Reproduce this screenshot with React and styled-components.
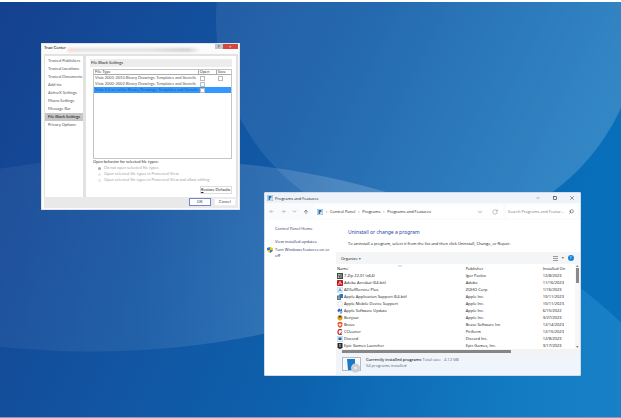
import React from "react";
import styled, { createGlobalStyle } from "styled-components";
import { ArrowLeft, ArrowRight, ArrowUp, ChevronDown, RotateCw, Search, Minus, Square, X } from "lucide-react";

const sidebarItems = [
  "Trusted Publishers",
  "Trusted Locations",
  "Trusted Documents",
  "Add-ins",
  "ActiveX Settings",
  "Macro Settings",
  "Message Bar",
  "File Block Settings",
  "Privacy Options",
];

const fileTypes = [
  { name: "Visio 2003-2010 Binary Drawings, Templates and Stencils", save: true },
  { name: "Visio 2000-2002 Binary Drawings, Templates and Stencils" },
  { name: "Visio 5.0 or earlier Binary Drawings, Templates and Stencils", selected: true },
];

const behaviors = [
  "Do not open selected file types",
  "Open selected file types in Protected View",
  "Open selected file types in Protected View and allow editing",
];

const programs = [
  ["7-Zip 22.01 (x64)", "Igor Pavlov", "12/8/2023", "zip"],
  ["Adobe Acrobat (64-bit)", "Adobe", "11/16/2023", "acrobat"],
  ["ADSelfService Plus", "ZOHO Corp.", "1/16/2023", "adself"],
  ["Apple Application Support (64-bit)", "Apple Inc.", "10/11/2023", "appsupport"],
  ["Apple Mobile Device Support", "Apple Inc.", "10/11/2023", "mobile"],
  ["Apple Software Update", "Apple Inc.", "6/15/2022", "update"],
  ["Bonjour", "Apple Inc.", "3/27/2023", "bonjour"],
  ["Brave", "Brave Software Inc", "12/14/2023", "brave"],
  ["CCleaner", "Piriform", "12/15/2023", "ccleaner"],
  ["Discord", "Discord Inc.", "12/8/2023", "discord"],
  ["Epic Games Launcher", "Epic Games, Inc.", "3/17/2023", "epic"],
];

export default function App() {
  return (
    <Desktop>
      <GlobalStyle />
      <Wallpaper />
      <TrustCenter />
      <ProgramsAndFeatures />
    </Desktop>
  );
}

function Wallpaper() {
  return (
    <WallpaperSvg viewBox="0 0 621 414" preserveAspectRatio="none" aria-hidden="true">
      <defs>
        <linearGradient id="base" x1="0" y1="0" x2="1" y2="0.3">
          <stop offset="0" stopColor="#15418f" />
          <stop offset="0.4" stopColor="#1254a1" />
          <stop offset="1" stopColor="#086fba" />
        </linearGradient>
        <linearGradient id="top" x1="0" y1="0" x2="1" y2="0.5">
          <stop offset="0" stopColor="#fff" stopOpacity="0.06" />
          <stop offset="0.5" stopColor="#fff" stopOpacity="0.09" />
          <stop offset="1" stopColor="#fff" stopOpacity="0.17" />
        </linearGradient>
        <linearGradient id="left" x1="0" y1="0" x2="1" y2="0">
          <stop offset="0" stopColor="#fff" stopOpacity="0.04" />
          <stop offset="0.4" stopColor="#fff" stopOpacity="0.07" />
          <stop offset="0.75" stopColor="#fff" stopOpacity="0.16" />
          <stop offset="1" stopColor="#fff" stopOpacity="0.2" />
        </linearGradient>
        <linearGradient id="corner" x1="0" y1="0" x2="1" y2="0">
          <stop offset="0" stopColor="#3aa5e0" stopOpacity="0" />
          <stop offset="1" stopColor="#3aa5e0" stopOpacity="0.32" />
        </linearGradient>
      </defs>
      <rect width="621" height="414" fill="url(#base)" />
      <circle cx="428" cy="18" r="212" fill="url(#top)" />
      <path
        d="M-60 180Q30 155 130 156C230 156 320 168 400 194C500 230 420 300 264 331C160 352 60 355 -60 336Z"
        fill="url(#left)"
      />
      <path d="M300 414V250H520Q575 275 621 320V414Z" fill="url(#corner)" />
    </WallpaperSvg>
  );
}

function TrustCenter() {
  return (
    <TrustWindow aria-label="Trust Center">
      <TrustTitle>
        <span>Trust Center</span>
        <TrustGlass />
        <HelpButton aria-label="Help">?</HelpButton>
        <RedClose aria-label="Close">×</RedClose>
      </TrustTitle>
      <TrustBody>
        <TrustSidebar>
          {sidebarItems.map((item) => (
            <SidebarButton key={item} $active={item === "File Block Settings"}>
              {item}
            </SidebarButton>
          ))}
        </TrustSidebar>
        <TrustMain>
          <SectionTitle>File Block Settings</SectionTitle>
          <TypeBox>
            <TypeTable>
              <thead>
                <tr>
                  <th>File Type</th>
                  <th>Open</th>
                  <th>Save</th>
                </tr>
              </thead>
              <tbody>
                {fileTypes.map((type) => (
                  <TypeRow key={type.name} $selected={type.selected}>
                    <td>{type.name}</td>
                    <td>
                      <Tick type="checkbox" aria-label={"Open " + type.name} />
                    </td>
                    <td>{type.save && <Tick type="checkbox" aria-label={"Save " + type.name} />}</td>
                  </TypeRow>
                ))}
              </tbody>
            </TypeTable>
          </TypeBox>
          <Behavior>
            <legend>Open behavior for selected file types:</legend>
            {behaviors.map((text, i) => (
              <BehaviorLabel key={text}>
                <Radio type="radio" name="behavior" disabled defaultChecked={i === 0} />
                {text}
              </BehaviorLabel>
            ))}
          </Behavior>
          <RestoreButton>Restore Defaults</RestoreButton>
        </TrustMain>
      </TrustBody>
      <TrustFooter>
        <DialogButton $primary>OK</DialogButton>
        <DialogButton>Cancel</DialogButton>
      </TrustFooter>
    </TrustWindow>
  );
}

function ProgramsAndFeatures() {
  return (
    <ProgramsWindow aria-label="Programs and Features">
      <ProgramsTitle>
        <PanelIcon />
        <TitleText>Programs and Features</TitleText>
        <IconButton aria-label="Minimize"><Minus size={4} /></IconButton>
        <IconButton aria-label="Maximize"><Square size={4} strokeWidth={4} /></IconButton>
        <IconButton aria-label="Close"><X size={6} /></IconButton>
      </ProgramsTitle>
      <NavBar>
        <NavButtons>
          <IconButton $muted aria-label="Back"><ArrowLeft size={5} /></IconButton>
          <IconButton $muted aria-label="Forward"><ArrowRight size={5} /></IconButton>
          <IconButton $muted aria-label="Recent"><ChevronDown size={5} strokeWidth={3} /></IconButton>
          <IconButton aria-label="Up"><ArrowUp size={6} /></IconButton>
        </NavButtons>
        <Address>
          <PanelIcon />
          <Crumb>›</Crumb>
          <a href="#control-panel">Control Panel</a>
          <Crumb>›</Crumb>
          <a href="#programs">Programs</a>
          <Crumb>›</Crumb>
          <a href="#features">Programs and Features</a>
          <Spacer />
          <IconButton $muted aria-label="Previous locations"><ChevronDown size={6} strokeWidth={3} /></IconButton>
          <IconButton $muted aria-label="Refresh"><RotateCw size={6} /></IconButton>
        </Address>
        <SearchBox>
          <input type="text" aria-label="Search" placeholder="Search Programs and Featur..." />
          <FlippedSearch size={5} />
        </SearchBox>
      </NavBar>
      <ProgramsBody>
        <Tasks>
          <TaskLink href="#home" $first>Control Panel Home</TaskLink>
          <TaskLink href="#updates">View installed updates</TaskLink>
          <ShieldLink href="#windows-features">
            <ShieldIcon />
            <span>Turn Windows features on or off</span>
          </ShieldLink>
        </Tasks>
        <ProgramsMain>
          <Intro>
            <h1>Uninstall or change a program</h1>
            <p>To uninstall a program, select it from the list and then click Uninstall, Change, or Repair.</p>
          </Intro>
          <Toolbar>
            <OrganizeButton>Organize <small>▾</small></OrganizeButton>
            <Spacer />
            <ViewButton aria-label="Change view">
              <svg width="5" height="5" viewBox="0 0 5 5">
                <path d="M0 .5h5M0 2.5h5M0 4.5h5" stroke="#999" />
              </svg>
            </ViewButton>
            <ViewButton aria-label="More view options"><small>▾</small></ViewButton>
            <HelpDot aria-label="Help">?</HelpDot>
          </Toolbar>
          <ListArea>
            <ProgramTable>
              <thead>
                <tr>
                  <th>
                    Name
                    <SortMark viewBox="0 0 4 2">
                      <path d="M0 2L2 0L4 2" fill="none" stroke="#aaa" strokeWidth=".6" />
                    </SortMark>
                  </th>
                  <th>Publisher</th>
                  <th>Installed On</th>
                </tr>
              </thead>
              <tbody>
                {programs.map(([name, publisher, date, icon]) => (
                  <tr key={name}>
                    <td>
                      <NameCell>
                        <ProgramIcon kind={icon} />
                        {name}
                      </NameCell>
                    </td>
                    <td>{publisher}</td>
                    <td>{date}</td>
                  </tr>
                ))}
              </tbody>
            </ProgramTable>
            <VScroll>
              <small>▴</small>
              <VThumb />
              <Spacer />
              <small>▾</small>
            </VScroll>
          </ListArea>
          <HScroll>
            <HThumb />
          </HScroll>
          <Status>
            <DiscIcon />
            <div>
              <p>
                <b>Currently installed programs</b> <span>Total size:</span> <em>4.12 GB</em>
              </p>
              <p>54 programs installed</p>
            </div>
          </Status>
        </ProgramsMain>
      </ProgramsBody>
    </ProgramsWindow>
  );
}

function PanelIcon() {
  return (
    <svg width="6" height="6" viewBox="0 0 12 12" aria-hidden="true">
      <rect x=".5" y=".5" width="11" height="11" fill="#e8f2fa" stroke="#8fa9bd" />
      <path d="M3 2h6v3L6 8v2H3z" fill="#1874c4" />
      <circle cx="8.5" cy="8.5" r="2.5" fill="#cfdbe5" />
    </svg>
  );
}

function ShieldIcon() {
  return (
    <svg width="6" height="6" viewBox="0 0 12 12" aria-hidden="true">
      <path d="M6 0L0 2v4h6z" fill="#2f7fd0" />
      <path d="M6 0l6 2v4H6z" fill="#f3c613" />
      <path d="M0 6h6v6Q1 10 0 6z" fill="#f3c613" />
      <path d="M12 6H6v6q5-2 6-6z" fill="#2f7fd0" />
    </svg>
  );
}

function DiscIcon() {
  return (
    <svg width="20" height="16" viewBox="0 0 20 16" aria-hidden="true">
      <rect x=".5" y=".5" width="18" height="13" fill="#f7fafc" stroke="#b4bcc4" />
      <path d="M5 2h8v6l-3 2v3H6z" fill="#1878c9" />
      <circle cx="13.5" cy="11" r="4.5" fill="#c9cfd5" />
      <circle cx="13.5" cy="11" r="1.2" fill="#f3f6f8" />
    </svg>
  );
}

const iconShapes = {
  zip: (
    <>
      <rect width="12" height="12" fill="#3c4a44" />
      <path d="M2 3h3L2 9h3M8 2v8" stroke="#dde5df" strokeWidth="1.5" fill="none" />
    </>
  ),
  acrobat: (
    <>
      <rect width="12" height="12" rx="1.5" fill="#c4161c" />
      <path d="M2 9Q6 7 6 2Q6 7 10 8Q6 6 2 9" stroke="#fff" fill="none" />
    </>
  ),
  adself: (
    <>
      <rect x=".5" y=".5" width="11" height="11" fill="#eef6fc" stroke="#b8d3e8" />
      <path d="M3 9l3-6 3 6M4 7h4" stroke="#2d8fd6" strokeWidth="1.4" fill="none" />
    </>
  ),
  appsupport: (
    <>
      <rect x="0" y="3" width="8" height="9" fill="#5b7383" />
      <rect x="5" y="0" width="7" height="8" fill="#2878b8" />
      <path d="M2 6h4M2 9h4" stroke="#dfe8ee" />
    </>
  ),
  mobile: <rect x="1.5" y="1.5" width="9" height="9" rx="2" fill="#fbfbfc" stroke="#cdd2d8" />,
  update: (
    <>
      <path d="M1 6Q1 1 6 1V4l4-3v6H6Q3 6 3 9z" fill="#3068c8" />
      <path d="M11 6q0 6-5 6V9z" fill="#7ea3dd" />
    </>
  ),
  bonjour: (
    <>
      <path d="M1 3h10v5q-5 6-10 0z" fill="#e2a11a" />
      <rect x="3" y="1" width="6" height="4" fill="#5a4317" />
    </>
  ),
  brave: (
    <>
      <path d="M3 0h6l2 3-1 6-4 3-4-3-1-6z" fill="#ee4f26" />
      <path d="M4 3l2 1 2-1 1 2-3 4-3-4z" fill="#fff" />
    </>
  ),
  ccleaner: (
    <>
      <path d="M10 2Q2-1 2 6t8 4" stroke="#c62828" strokeWidth="2.6" fill="none" />
      <path d="M5 12l5-7" stroke="#6b6b6b" strokeWidth="2" />
    </>
  ),
  discord: (
    <>
      <rect x=".5" y=".5" width="11" height="11" fill="#eaf3fb" stroke="#b7cbdc" />
      <rect x="3" y="3" width="6" height="5" fill="#1667b7" />
    </>
  ),
  epic: (
    <>
      <path d="M1 0h10v10l-5 2-5-2z" fill="#2b2b2b" />
      <path d="M4 3h4M4 5h3M4 7h4" stroke="#ddd" />
    </>
  ),
};

function ProgramIcon({ kind }) {
  return (
    <svg width="6" height="6" viewBox="0 0 12 12" aria-hidden="true">
      {iconShapes[kind]}
    </svg>
  );
}

const GlobalStyle = createGlobalStyle`
  * {
    box-sizing: border-box;
  }

  body {
    margin: 0;
    background: #fff;
  }

  button, input {
    font: inherit;
    color: inherit;
    margin: 0;
    padding: 0;
    border: none;
    background: none;
  }

  h1, p {
    margin: 0;
  }
`;

const Desktop = styled.main`
  position: relative;
  min-height: 100vh;
  overflow: hidden;
  border-top: 2px solid #fff;
  border-bottom: 1px solid #8d95bd;
`;

const WallpaperSvg = styled.svg`
  position: absolute;
  width: 100%;
  height: 100%;
`;

/* Trust Center */
const TrustWindow = styled.section`
  position: absolute;
  left: 41px;
  top: 41px;
  width: 32%;
  padding: 0 1px 1px 2px;
  background: #fbfbfb;
  border: 1px solid #dfe4ea;
  color: #444;
  font: 4px/6px "Liberation Sans Narrow", "Lato", sans-serif;
`;

const TrustTitle = styled.header`
  display: flex;
  align-items: flex-start;
  height: 10px;
  line-height: 8px;
  color: #000;
`;

const TrustGlass = styled.div`
  flex: 1;
  height: 4px;
  margin: 4px 14px 0 2px;
  background: linear-gradient(90deg, #f6d9cf, #e4e4e4 10%, #e4e4e4 60%, #d2d2d2 90%, #fbfbfb);
  filter: blur(1px);
`;

const HelpButton = styled.button`
  width: 8px;
  height: 5px;
  line-height: 5px;
  background: #c3c7cd;
`;

const RedClose = styled.button`
  width: 15px;
  height: 5px;
  line-height: 5px;
  background: #d2483f;
  color: #fff;
`;

const TrustBody = styled.div`
  display: flex;
  gap: 3px;
  padding: 2px 2px 0 1px;
  background: #e2e2e2;
`;

const TrustSidebar = styled.nav`
  display: flex;
  flex-direction: column;
  width: 38px;
  padding-top: 1px;
  background: #fff;
`;

const SidebarButton = styled.button`
  height: 8px;
  padding-left: 3px;
  text-align: left;
  white-space: nowrap;
  background: ${(props) => (props.$active ? "#c6c6c6" : "#fff")};
  color: ${(props) => (props.$active ? "#111" : "#555")};
`;

const TrustMain = styled.div`
  flex: 1;
  display: flex;
  flex-direction: column;
  padding: 3px 4px 3px;
  background: #fff;
`;

const SectionTitle = styled.div`
  height: 8px;
  padding-left: 1px;
  line-height: 8px;
  background: #ececec;
  color: #222;
`;

const TypeBox = styled.div`
  height: 90px;
  margin: 2px 0 0 3px;
  border: 1px solid #c4c4c4;
`;

const TypeTable = styled.table`
  width: 100%;
  table-layout: fixed;
  border-collapse: separate;
  border-spacing: 0;

  th {
    height: 5px;
    padding: 0 1px;
    line-height: 4px;
    font-weight: normal;
    text-align: left;
    border-right: 1px solid #aaa;
    border-bottom: 1px solid #aaa;
  }

  th:nth-child(n + 2) {
    width: 18px;
  }

  th:last-child {
    width: 14px;
    border-right: none;
  }

  td {
    height: 6px;
    padding: 0 1px;
    line-height: 6px;
    white-space: nowrap;
    overflow: hidden;
  }
`;

const TypeRow = styled.tr`
  background: ${(props) => (props.$selected ? "#3399ff" : "#fff")};
  color: ${(props) => (props.$selected ? "#1c5fa8" : "#555")};
`;

const Tick = styled.input`
  appearance: none;
  display: block;
  width: 5px;
  height: 5px;
  border: 1px solid #bbb;
  background: #fff;
`;

const Behavior = styled.fieldset`
  display: flex;
  flex-direction: column;
  margin: 0 0 3px 3px;
  padding: 0;
  border: none;

  legend {
    padding: 0;
    color: #333;
  }
`;

const BehaviorLabel = styled.label`
  display: flex;
  align-items: center;
  gap: 3px;
  height: 6px;
  padding-left: 5px;
  color: #a5a5a5;
  white-space: nowrap;
`;

const Radio = styled.input`
  appearance: none;
  width: 3px;
  height: 3px;
  border-radius: 50%;
  background: #e8e8e8;

  &:checked {
    background: #aaa;
  }
`;

const RestoreButton = styled.button`
  align-self: flex-end;
  width: 32px;
  height: 8px;
  border: 1px solid #ddd;
  color: #222;
  line-height: 6px;
  white-space: nowrap;

  &::first-letter {
    text-decoration: underline;
  }
`;

const TrustFooter = styled.footer`
  display: flex;
  justify-content: flex-end;
  gap: 3px;
  padding: 1px 2px 2px;
  background: #e9e9e9;
`;

const DialogButton = styled.button`
  width: 22px;
  height: 8px;
  line-height: 6px;
  background: #fff;
  border: 1px solid ${(props) => (props.$primary ? "#7286cc" : "#eee")};
`;

/* Programs and Features */
const ProgramsWindow = styled.section`
  position: absolute;
  left: 264px;
  top: 190px;
  width: 51%;
  display: flex;
  flex-direction: column;
  border: 1px solid #cfdcea;
  border-radius: 1px;
  background: #fff;
  color: #111;
  font: 4px/7px "Open Sans", "Noto Sans", sans-serif;

  a {
    color: inherit;
    text-decoration: none;
  }

  small {
    font: 4px/4px "DejaVu Sans", sans-serif;
    color: #666;
  }
`;

const ProgramsTitle = styled.header`
  display: flex;
  align-items: center;
  gap: 2px;
  height: 10px;
  padding-left: 2px;
  background: #eef3fa;
`;

const TitleText = styled.span`
  flex: 1;
`;

const IconButton = styled.button`
  display: flex;
  align-items: center;
  justify-content: center;
  width: 15px;
  color: ${(props) => (props.$muted ? "#888" : "#333")};
`;

const NavBar = styled.div`
  display: flex;
  align-items: center;
  gap: 3px;
  height: 17px;
  padding: 0 3px 0 1px;
  background: #fafbfd;
`;

const NavButtons = styled.div`
  display: flex;
  width: 46px;

  button {
    flex: 1;
  }
`;

const Address = styled.div`
  flex: 1;
  display: flex;
  align-items: center;
  height: 13px;
  padding-left: 2px;
  background: #fff;
  white-space: nowrap;
`;

const Crumb = styled.span`
  width: 7px;
  text-align: center;
`;

const Spacer = styled.span`
  flex: 1;
`;

const SearchBox = styled.label`
  display: flex;
  align-items: center;
  width: 71px;
  height: 13px;
  padding: 0 3px 0 2px;
  background: #fff;

  input {
    flex: 1;
    min-width: 0;
    height: 8px;
  }

  input::placeholder {
    color: #777;
  }
`;

const FlippedSearch = styled(Search)`
  transform: scaleX(-1);
`;

const ProgramsBody = styled.div`
  display: flex;
`;

const Tasks = styled.nav`
  display: flex;
  flex-direction: column;
  width: 71px;
  padding: 5px 2px 0 10px;
  color: #1d2c66;
`;

const TaskLink = styled.a`
  margin-bottom: ${(props) => (props.$first ? "6px" : "2px")};
  white-space: nowrap;
`;

const ShieldLink = styled.a`
  display: flex;
  gap: 2px;
  margin-left: -8px;
  line-height: 6px;

  svg {
    flex: none;
  }
`;

const ProgramsMain = styled.div`
  flex: 1;
  min-width: 0;
`;

const Intro = styled.div`
  padding: 8px 0 5px 12px;

  h1 {
    margin-bottom: 4px;
    font: 5px/8px "Noto Sans", sans-serif;
    color: #1f3fa8;
  }
`;

const Toolbar = styled.div`
  display: flex;
  align-items: center;
  gap: 4px;
  height: 12px;
  padding: 0 6px 0 5px;
  background: #f4f5f7;
`;

const OrganizeButton = styled.button`
  color: #111;
`;

const ViewButton = styled.button`
  display: flex;
`;

const HelpDot = styled.button`
  width: 6px;
  height: 6px;
  line-height: 6px;
  border-radius: 50%;
  background: #1684d8;
  color: #fff;
`;

const ListArea = styled.div`
  display: flex;
`;

const ProgramTable = styled.table`
  flex: 1;
  table-layout: fixed;
  border-collapse: collapse;

  th, td {
    height: 7px;
    padding: 0 1px;
    text-align: left;
    font-weight: normal;
    line-height: 7px;
    white-space: nowrap;
  }

  th {
    height: 8px;
  }

  th:nth-child(2) {
    width: 77px;
  }

  th:nth-child(3) {
    width: 33px;
  }
`;

const NameCell = styled.div`
  display: flex;
  align-items: center;
  gap: 1px;
`;

const SortMark = styled.svg`
  width: 4px;
  height: 2px;
  margin-left: 50px;
  vertical-align: top;
`;

const VScroll = styled.div`
  display: flex;
  flex-direction: column;
  align-items: center;
  width: 5px;
  background: #f7f7f7;
`;

const VThumb = styled.div`
  width: 3px;
  height: 15px;
  background: #8a8a8a;
`;

const HScroll = styled.div`
  height: 5px;
  padding: 1px 0 0 6px;
  background: #f3f3f3;
`;

const HThumb = styled.div`
  width: 71%;
  height: 3px;
  background: #868686;
`;

const Status = styled.footer`
  display: flex;
  gap: 4px;
  padding: 3px 6px 2px;
  background: #f0f4fb;
  line-height: 6px;
  color: #56607a;

  b {
    font-weight: 600;
    color: #333;
  }

  em {
    margin-left: 2px;
    font-style: normal;
  }
`;
